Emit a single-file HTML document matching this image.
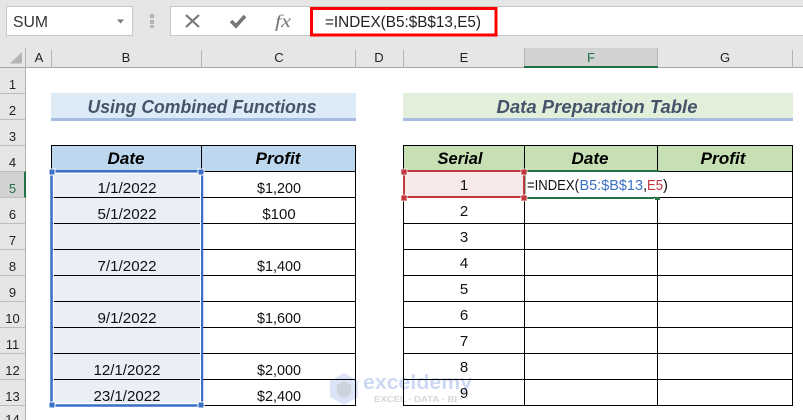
<!DOCTYPE html>
<html><head><meta charset="utf-8"><style>
html,body{margin:0;padding:0;background:#fff;width:803px;height:420px;overflow:hidden}
svg{display:block}
text{font-family:"Liberation Sans",sans-serif;text-anchor:middle;fill:#000}
.h{font-size:13px;fill:#222}
.c{font-size:15px;fill:#111}
.th{font-size:17px;font-weight:bold;font-style:italic;fill:#000}
.t{font-size:18px;font-weight:bold;font-style:italic;fill:#44546a}
</style></head><body>
<svg width="803" height="420" viewBox="0 0 803 420" xmlns="http://www.w3.org/2000/svg">
<!-- ribbon -->
<rect x="0" y="0" width="803" height="48" fill="#e6e6e6"/>
<rect x="6.500" y="6.500" width="126" height="29" fill="#fff" stroke="#c6c6c6"/>
<text x="13" y="27" font-size="15.500" style="text-anchor:start;fill:#333" textLength="35" lengthAdjust="spacingAndGlyphs">SUM</text>
<path d="M117 19.500h7l-3.500 4z" fill="#777"/>
<rect x="150" y="14" width="4" height="4" fill="#b4b4b4"/><rect x="150" y="20" width="4" height="4" fill="#b4b4b4"/><rect x="150" y="25" width="4" height="3" fill="#b4b4b4"/>
<rect x="170.500" y="6.500" width="136" height="29" fill="#fff" stroke="#c6c6c6"/>
<rect x="306" y="7" width="497" height="28" fill="#fff"/>
<path d="M306 6.500H803M306 35.500H803" stroke="#c6c6c6"/>
<path d="M186 15l13 12M199 15l-13 12" stroke="#777" stroke-width="2.200" fill="none"/>
<path d="M231 21l5 5 9-10" stroke="#777" stroke-width="3.600" fill="none"/>
<text x="283" y="27" font-size="18" style="font-family:'Liberation Serif',serif;font-style:italic;fill:#777" textLength="16" lengthAdjust="spacingAndGlyphs">fx</text>
<rect x="311.500" y="8.500" width="184.500" height="26.500" fill="#fff" stroke="#f00" stroke-width="3"/>
<text x="325" y="27" font-size="15.500" style="text-anchor:start;fill:#222" textLength="156" lengthAdjust="spacingAndGlyphs">=INDEX(B5:$B$13,E5)</text>

<!-- column header -->
<rect x="0" y="48" width="803" height="19" fill="#e6e6e6"/>
<rect x="524" y="48" width="134" height="19" fill="#d2d2d2"/>
<path d="M0 67.500H803" stroke="#a6a6a6"/>
<path d="M25.500 48V420M51.500 50V67M201.500 50V67M355.500 50V67M403.500 50V67M524.500 48V67M657.500 48V67M792.500 50V67" stroke="#b4b4b4"/>
<rect x="524" y="66" width="134" height="2" fill="#217346"/>
<path d="M10 63.500L22 52V63.500z" fill="#b4b4b4"/>
<text class="h" x="39" y="62">A</text><text class="h" x="126" y="62">B</text><text class="h" x="279" y="62">C</text><text class="h" x="379" y="62">D</text><text class="h" x="464" y="62">E</text><text class="h" x="591" y="62" style="fill:#217346">F</text><text class="h" x="725" y="62">G</text>
<!-- row header -->
<rect x="0" y="68" width="25" height="352" fill="#e6e6e6"/>
<rect x="0" y="171" width="25" height="26" fill="#d2d2d2"/>
<rect x="24" y="171" width="2" height="27" fill="#217346"/>
<path d="M0 93.500H25M0 119.500H25M0 145.500H25M0 171.500H25M0 197.500H25M0 223.500H25M0 249.500H25M0 275.500H25M0 301.500H25M0 327.500H25M0 353.500H25M0 379.500H25M0 405.500H25" stroke="#bdbdbd"/>
<text class="h" x="12.500" y="89">1</text><text class="h" x="12.500" y="115">2</text><text class="h" x="12.500" y="141">3</text><text class="h" x="12.500" y="167">4</text><text class="h" x="12.500" y="193" style="fill:#217346">5</text><text class="h" x="12.500" y="219">6</text><text class="h" x="12.500" y="245">7</text><text class="h" x="12.500" y="271">8</text><text class="h" x="12.500" y="297">9</text><text class="h" x="12.500" y="323">10</text><text class="h" x="12.500" y="349">11</text><text class="h" x="12.500" y="375">12</text><text class="h" x="12.500" y="401">13</text><text class="h" x="12.500" y="424">14</text>

<!-- titles -->
<rect x="51" y="93" width="305" height="25" fill="#ddebf7"/>
<rect x="51" y="118" width="305" height="3" fill="#a5bbe1"/>
<text class="t" x="202" y="113" textLength="229" lengthAdjust="spacingAndGlyphs">Using Combined Functions</text>
<rect x="403" y="93" width="390" height="25" fill="#e2efda"/>
<rect x="403" y="118" width="390" height="3" fill="#a5bbe1"/>
<text class="t" x="597" y="113" textLength="201" lengthAdjust="spacingAndGlyphs">Data Preparation Table</text>

<!-- left table -->
<rect x="51" y="145" width="305" height="26" fill="#bdd7ee"/>
<rect x="52" y="172" width="149" height="233" fill="#e9eef7"/>

<!-- watermark (under grid) -->
<path d="M344 373l-14 8v16l14 8 14-8v-16z" fill="#dce4f7"/>
<path d="M344 381l-7 4v9l7 4 7-4v-9z" fill="#ced2dc"/>
<text x="363" y="389" font-size="20" font-weight="bold" style="text-anchor:start;fill:#ccd8f4" textLength="109" lengthAdjust="spacingAndGlyphs">exceldemy</text>
<text x="374" y="402" font-size="8" font-weight="bold" style="text-anchor:start;fill:#d6d6d6" textLength="83" lengthAdjust="spacingAndGlyphs">EXCEL · DATA · BI</text>

<path d="M51.500 145V405M201.500 145V405M355.500 145V406M51 145.500H356M51 171.500H356M51 197.500H356M51 223.500H356M51 249.500H356M51 275.500H356M51 301.500H356M51 327.500H356M51 353.500H356M51 379.500H356M51 405.500H356" stroke="#000" stroke-width="1"/>
<text class="th" x="126" y="164" textLength="37" lengthAdjust="spacingAndGlyphs">Date</text>
<text class="th" x="278" y="164" textLength="45" lengthAdjust="spacingAndGlyphs">Profit</text>
<text class="c" x="127" y="193" textLength="59" lengthAdjust="spacingAndGlyphs">1/1/2022</text>
<text class="c" x="127" y="219" textLength="59" lengthAdjust="spacingAndGlyphs">5/1/2022</text>
<text class="c" x="127" y="271" textLength="59" lengthAdjust="spacingAndGlyphs">7/1/2022</text>
<text class="c" x="127" y="323" textLength="59" lengthAdjust="spacingAndGlyphs">9/1/2022</text>
<text class="c" x="127" y="375" textLength="67" lengthAdjust="spacingAndGlyphs">12/1/2022</text>
<text class="c" x="127" y="401" textLength="67" lengthAdjust="spacingAndGlyphs">23/1/2022</text>
<text class="c" x="279" y="193" textLength="44" lengthAdjust="spacingAndGlyphs">$1,200</text>
<text class="c" x="279" y="219">$100</text>
<text class="c" x="279" y="271" textLength="44" lengthAdjust="spacingAndGlyphs">$1,400</text>
<text class="c" x="279" y="323" textLength="44" lengthAdjust="spacingAndGlyphs">$1,600</text>
<text class="c" x="279" y="375" textLength="44" lengthAdjust="spacingAndGlyphs">$2,000</text>
<text class="c" x="279" y="401" textLength="44" lengthAdjust="spacingAndGlyphs">$2,400</text>
<!-- left selection -->
<rect x="51.500" y="171.250" width="150.500" height="234.250" fill="none" stroke="#3a70c6" stroke-width="2.500"/>
<path d="M53.500 173V404M200.500 173V404M53 173.500H200M53 403.500H200" stroke="#fff" fill="none"/>
<rect x="49" y="169" width="6" height="6" fill="#3a70c6" stroke="#fff"/>
<rect x="198" y="169" width="6" height="6" fill="#3a70c6" stroke="#fff"/>
<rect x="49" y="402" width="6" height="6" fill="#3a70c6" stroke="#fff"/>
<rect x="198" y="402" width="6" height="6" fill="#3a70c6" stroke="#fff"/>

<!-- right table -->
<rect x="403" y="145" width="390" height="26" fill="#c6e0b4"/>
<path d="M403.500 145V406M524.500 145V406M657.500 145V406M792.500 145V406M403 145.500H793M403 171.500H793M403 197.500H793M403 223.500H793M403 249.500H793M403 275.500H793M403 301.500H793M403 327.500H793M403 353.500H793M403 379.500H793M403 405.500H793" stroke="#000" stroke-width="1"/>
<text class="th" x="460" y="164" textLength="45" lengthAdjust="spacingAndGlyphs">Serial</text>
<text class="th" x="590" y="164" textLength="37" lengthAdjust="spacingAndGlyphs">Date</text>
<text class="th" x="723" y="164" textLength="45" lengthAdjust="spacingAndGlyphs">Profit</text>
<rect x="404" y="172" width="120" height="25" fill="#f8e9e9"/>
<rect x="525" y="172" width="133" height="25" fill="#fff"/>
<text class="c" x="464" y="190">1</text><text class="c" x="464" y="216">2</text><text class="c" x="464" y="242">3</text><text class="c" x="464" y="268">4</text><text class="c" x="464" y="294">5</text><text class="c" x="464" y="320">6</text><text class="c" x="464" y="346">7</text><text class="c" x="464" y="372">8</text><text class="c" x="464" y="398">9</text>
<!-- active cell formula -->
<text x="527" y="190" font-size="15" style="text-anchor:start;fill:#111" textLength="52" lengthAdjust="spacingAndGlyphs">=INDEX(</text>
<text x="579.500" y="190" font-size="15" style="text-anchor:start;fill:#3a70c6" textLength="63.500" lengthAdjust="spacingAndGlyphs">B5:$B$13</text>
<text x="643" y="190" font-size="15" style="text-anchor:start;fill:#111">,</text>
<text x="647" y="190" font-size="15" style="text-anchor:start;fill:#c0353f" textLength="16" lengthAdjust="spacingAndGlyphs">E5</text>
<text x="663" y="190" font-size="15" style="text-anchor:start;fill:#111">)</text>
<!-- green active border -->
<path d="M526 171H659M526 198H654" stroke="#217346" stroke-width="2" fill="none"/>
<rect x="523.500" y="175" width="2" height="19" fill="#217346"/>
<rect x="655" y="197" width="5" height="3" fill="#217346"/>
<!-- red reference -->
<rect x="404" y="171" width="120" height="26" fill="none" stroke="#c0393f" stroke-width="2"/>
<rect x="401" y="169" width="6" height="6" fill="#c0393f" stroke="#fff" stroke-width=".7"/>
<rect x="521" y="169" width="6" height="6" fill="#c0393f" stroke="#fff" stroke-width=".7"/>
<rect x="401" y="195" width="6" height="6" fill="#c0393f" stroke="#fff" stroke-width=".7"/>
<rect x="521" y="195" width="6" height="6" fill="#c0393f" stroke="#fff" stroke-width=".7"/>
</svg>
</body></html>
